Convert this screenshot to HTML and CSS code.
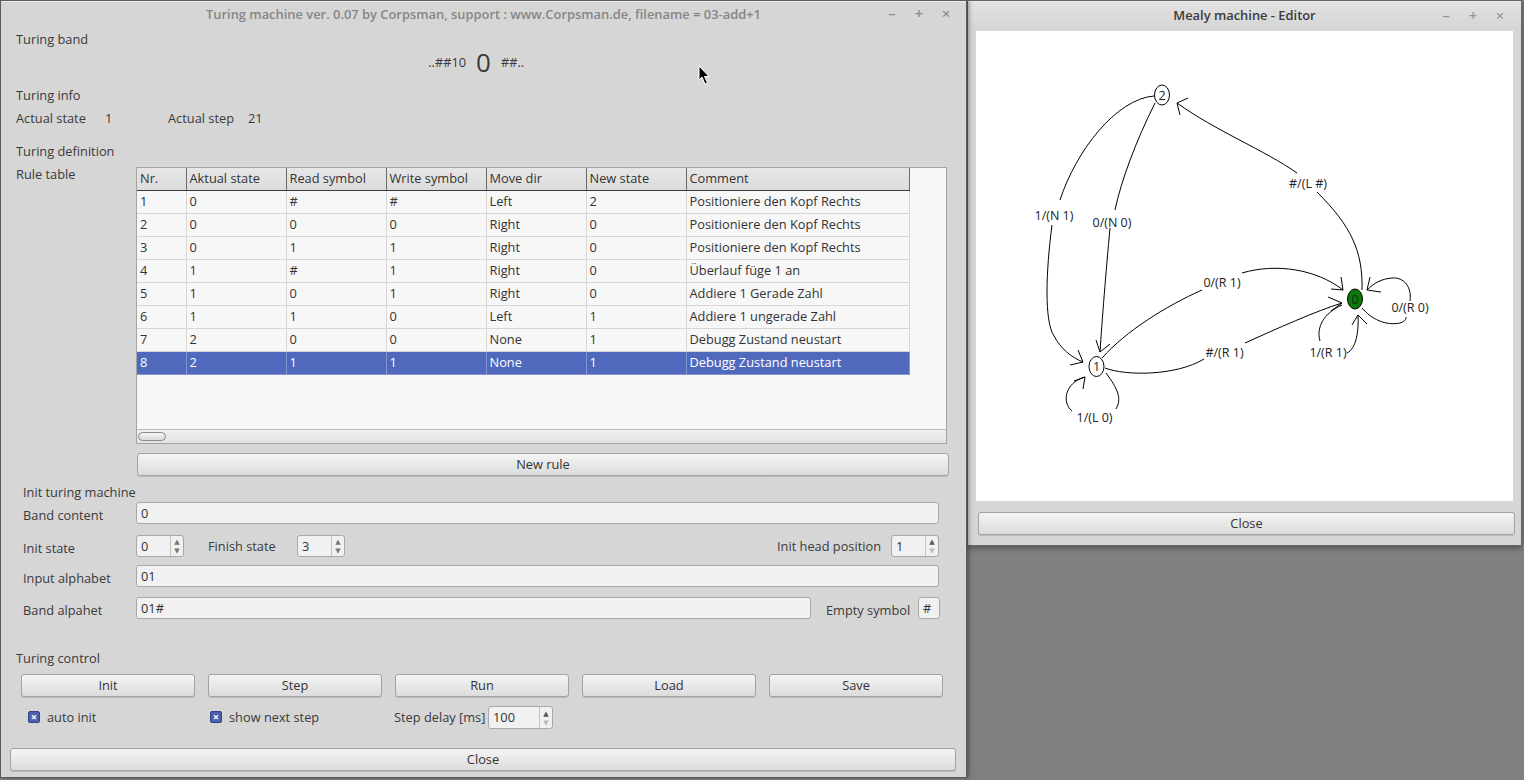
FILE: index.html
```html
<!DOCTYPE html>
<html>
<head>
<meta charset="utf-8">
<link rel="stylesheet" href="styles.css">
</head>
<body>
<div class="desktop">
  <div class="win main">
    <div class="titlebar">
      <span class="title inactive">Turing machine ver. 0.07 by Corpsman, support : www.Corpsman.de, filename = 03-add+1</span>
      <div class="wctl"><span>&#8211;</span><span>+</span><span>&#215;</span></div>
    </div>
    <div class="body">
      <div class="sec">Turing band</div>
      <div class="band"><span class="bl">..##10</span><span class="head">0</span><span class="br">##..</span></div>
      <div class="sec mt10">Turing info</div>
      <div class="info"><span class="w89">Actual state</span><span class="w63">1</span><span class="w80">Actual step</span><span>21</span></div>
      <div class="sec mt11">Turing definition</div>
      <div class="rules">
        <div class="rules-label">Rule table</div>
        <div class="tframe">
          <div class="tview">
            <table class="grid">
              <colgroup><col class="c50"><col class="c100"><col class="c100"><col class="c100"><col class="c100"><col class="c100"><col class="c223"></colgroup>
              <thead><tr><th>Nr.</th><th>Aktual state</th><th>Read symbol</th><th>Write symbol</th><th>Move dir</th><th>New state</th><th>Comment</th></tr></thead>
              <tbody>
                <tr><td>1</td><td>0</td><td>#</td><td>#</td><td>Left</td><td>2</td><td>Positioniere den Kopf Rechts</td></tr>
                <tr><td>2</td><td>0</td><td>0</td><td>0</td><td>Right</td><td>0</td><td>Positioniere den Kopf Rechts</td></tr>
                <tr><td>3</td><td>0</td><td>1</td><td>1</td><td>Right</td><td>0</td><td>Positioniere den Kopf Rechts</td></tr>
                <tr><td>4</td><td>1</td><td>#</td><td>1</td><td>Right</td><td>0</td><td>Überlauf füge 1 an</td></tr>
                <tr><td>5</td><td>1</td><td>0</td><td>1</td><td>Right</td><td>0</td><td>Addiere 1 Gerade Zahl</td></tr>
                <tr><td>6</td><td>1</td><td>1</td><td>0</td><td>Left</td><td>1</td><td>Addiere 1 ungerade Zahl</td></tr>
                <tr><td>7</td><td>2</td><td>0</td><td>0</td><td>None</td><td>1</td><td>Debugg Zustand neustart</td></tr>
                <tr class="sel"><td>8</td><td>2</td><td>1</td><td>1</td><td>None</td><td>1</td><td>Debugg Zustand neustart</td></tr>
              </tbody>
            </table>
          </div>
          <div class="hscroll"><div class="handle"></div></div>
        </div>
      </div>
      <div class="newrule-row"><button class="btn newrule">New rule</button></div>

      <div class="init">
        <div class="sub">Init turing machine</div>
        <div class="frow r1"><span class="lab">Band content</span><div class="field grow">0</div></div>
        <div class="frow r2">
          <span class="lab">Init state</span>
          <div class="spin"><span class="val">0</span><span class="arr"><i class="up">&#9650;</i><i class="dn">&#9660;</i></span></div>
          <span class="lab2">Finish state</span>
          <div class="spin"><span class="val">3</span><span class="arr"><i class="up">&#9650;</i><i class="dn">&#9660;</i></span></div>
          <span class="spacer"></span>
          <span class="lab3">Init head position</span>
          <div class="spin"><span class="val">1</span><span class="arr"><i class="up dark">&#9650;</i><i class="dn light">&#9660;</i></span></div>
        </div>
        <div class="frow r3"><span class="lab">Input alphabet</span><div class="field grow">01</div></div>
        <div class="frow r4"><span class="lab">Band alpahet</span><div class="field grow">01#</div><span class="lab4">Empty symbol</span><div class="field small">#</div></div>
      </div>

      <div class="sec ctl">Turing control</div>
      <div class="btnrow">
        <button class="btn">Init</button><button class="btn">Step</button><button class="btn">Run</button><button class="btn">Load</button><button class="btn">Save</button>
      </div>
      <div class="checkrow">
        <span class="chk"><i class="box">&#215;</i>auto init</span>
        <span class="chk c2"><i class="box">&#215;</i>show next step</span>
        <span class="lab5">Step delay [ms]</span>
        <div class="spin wide"><span class="val">100</span><span class="arr"><i class="up dark">&#9650;</i><i class="dn light">&#9660;</i></span></div>
      </div>
      <div class="closerow"><button class="btn full">Close</button></div>
    </div>
  </div>

  <div class="side">
    <div class="win editor">
      <div class="titlebar">
        <span class="title active">Mealy machine - Editor</span>
        <div class="wctl"><span>&#8211;</span><span>+</span><span>&#215;</span></div>
      </div>
      <div class="canvas">
        <svg width="537" height="470" viewBox="0 0 537 470" class="graph">
          <g fill="none" stroke="#000" stroke-width="1">
            <path d="M178,65 C140,68 100,120 84,169"/>
            <path d="M76,194 C70,240 68,290 78,305 C85,318 95,326 107,331"/>
            <path d="M94,334 L107,331 L102,319"/>
            <path d="M179,72 C160,110 145,150 139,179"/>
            <path d="M134,197 C130,240 126,290 124,321"/>
            <path d="M120,309 L124,321 L134,313"/>
            <path d="M386,259 C387,220 375,195 341,161"/>
            <path d="M321,142 C290,120 240,100 201,72"/>
            <path d="M212,67 L201,72 L204,84"/>
            <path d="M126,327 C150,300 190,275 226,259"/>
            <path d="M266,242 C300,232 340,238 367,259"/>
            <path d="M365,246 L367,259 L355,258"/>
            <path d="M129,337 C150,345 200,345 228,328"/>
            <path d="M269,312 C300,298 340,280 366,272"/>
            <path d="M352,266 L366,272 L355,280"/>
            <path d="M130,342 C142,358 146,368 140,378"/>
            <path d="M96,380 C86,372 88,352 109,346"/>
            <path d="M98,350 L109,346 L107,358"/>
            <path d="M371,322 C380,318 383,300 382,284"/>
            <path d="M376,294 L382,284 L391,293"/>
            <path d="M344,310 C340,296 348,282 366,274"/>
            <path d="M386,277 C395,288 410,295 424,292 C430,290 430,288 430,286"/>
            <path d="M434,270 C436,256 428,246 416,247 C405,248 398,252 391,259"/>
            <path d="M394,246 L391,259 L405,261"/>
          </g>
          <ellipse cx="186" cy="64" rx="7.5" ry="10" fill="#fff" stroke="#000"/>
          <ellipse cx="120.5" cy="335.5" rx="7.5" ry="10" fill="#fff" stroke="#000"/>
          <ellipse cx="379" cy="268" rx="7.5" ry="10" fill="#0a7a0a" stroke="#000"/>
          <g class="glab">
            <text x="186" y="68.5">2</text>
            <text x="120.5" y="340">1</text>
            <text x="379" y="272.5" fill="#cfe8cf">0</text>
            <text x="78" y="188.5">1/(N 1)</text>
            <text x="136" y="195.5">0/(N 0)</text>
            <text x="332" y="156.5">#/(L #)</text>
            <text x="246" y="255.5">0/(R 1)</text>
            <text x="248.5" y="325.5">#/(R 1)</text>
            <text x="352" y="325.5">1/(R 1)</text>
            <text x="434" y="280.5">0/(R 0)</text>
            <text x="118.5" y="390.5">1/(L 0)</text>
          </g>
        </svg>
      </div>
      <div class="ed-close"><button class="btn full">Close</button></div>
    </div>
  </div>

  <svg class="cursor" width="14" height="22" viewBox="0 0 14 22">
    <path d="M1,1 L1,15 L4,12 L7,19 L9.5,18 L6.5,11.5 L11,11.5 Z" fill="#000" stroke="#fff" stroke-width="1"/>
  </svg>
</div>
</body>
</html>
```

FILE: styles.css
```css
* { box-sizing: border-box; }
html, body { margin: 0; padding: 0; }
body {
  width: 1524px; height: 780px; overflow: hidden;
  font-family: "Open Sans", "DejaVu Sans", sans-serif;
  font-size: 12.8px;
  color: #3a3a3a;
  background: #808080;
}
.desktop {
  position: relative;
  display: flex;
  align-items: flex-start;
  width: 1524px; height: 780px;
  background: #808080;
}
.win {
  background: #d6d6d6;
  border: 1px solid #5a5a5a;
}
.main {
  width: 967px; height: 778px;
  box-shadow: 2px 0 4px rgba(0,0,0,0.35);
  position: relative; z-index: 1;
}
.side { flex: 1; display: flex; flex-direction: column; }
.editor {
  width: 555px; height: 546px;
  border-color: #666;
  box-shadow: 0 2px 6px rgba(0,0,0,0.4);
}

.titlebar {
  height: 27px;
  display: flex; align-items: center; justify-content: center;
  position: relative;
  border-top: 1px solid #ececec;
}
.main .titlebar .title { margin-top: -2px; }
.title { font-weight: 600; font-size: 12.9px; }
.title.inactive { color: #868686; }
.title.active { color: #3a3a3a; }
.editor .titlebar { height: 30px; background: linear-gradient(#e2e2e2, #d4d4d4); }
.editor .titlebar .title { margin-top: -3px; }
.wctl {
  position: absolute; right: 14px; top: 0; height: 100%;
  display: flex; align-items: center; gap: 15px;
  color: #8c8c8c; font-size: 15px; font-weight: 600;
  margin-top: -2px;
}
.wctl span { width: 12px; text-align: center; }
.editor .wctl { color: #999; right: 15px; }

.body { padding-left: 15px; }
.sec { height: 22px; line-height: 22px; }
.mt10 { margin-top: 10px; }
.mt11 { margin-top: 11px; }
.band {
  height: 24px;
  display: grid; grid-template-columns: 1fr auto 1fr;
  align-items: center; column-gap: 10px;
  margin-left: -15px;
}
.bl { text-align: right; }
.br { text-align: left; }
.head { font-size: 26px; line-height: 24px; }
.info { height: 22px; line-height: 22px; margin-top: 1px; display: flex; }
.w89 { width: 89px; }
.w63 { width: 63px; }
.w80 { width: 80px; }

.rules { display: flex; margin-top: 5px; }
.rules-label { width: 120px; line-height: 15px; }
.tframe {
  width: 811px; height: 277px;
  border: 1px solid #a4a4a4;
  background: #f7f7f7;
  display: flex; flex-direction: column;
}
.tview { flex: 1; overflow: hidden; }
.grid { border-collapse: collapse; table-layout: fixed; width: 772px; }
.c50 { width: 49px; }
.c100 { width: 100px; }
.c223 { width: 223px; }
.grid th {
  height: 22px; padding: 0 3px 1px; text-align: left; font-weight: normal;
  background: linear-gradient(#e6e6e6, #dcdcdc);
  border-right: 1px solid #6a6a6a;
  border-bottom: 1px solid #3c3c3c;
  color: #333;
  white-space: nowrap;
}
.grid td {
  height: 23px; padding: 0 3px 2px; white-space: nowrap;
  border-right: 1px solid #d6d6d6;
  border-bottom: 1px solid #d6d6d6;
  color: #333;
}
.grid tr.sel td { background: #5069bd; color: #fff; border-right-color: #8595cf; border-bottom-color: #8595cf; }
.hscroll {
  height: 14px; border-top: 1px solid #b8b8b8;
  background: linear-gradient(#f0f0f0, #e2e2e2);
  padding: 2px 0 0 1px;
}
.handle {
  width: 28px; height: 9px; border: 1px solid #8a8a8a; border-radius: 5px;
  background: linear-gradient(#f4f4f4, #dadada);
}

.btn {
  font-family: inherit; font-size: 12.8px; color: #333;
  height: 23px; padding: 0 0 2px;
  border: 1px solid #a2a2a2; border-radius: 3px;
  background: linear-gradient(#f4f4f4, #e8e8e8 50%, #dcdcdc);
  box-shadow: 0 1px 0 rgba(0,0,0,0.12);
}
.newrule-row { margin-top: 9px; padding-left: 121px; }
.newrule { width: 812px; display: block; }

.init { padding-left: 7px; margin-top: 6px; }
.sub { height: 20px; line-height: 20px; }
.frow { display: flex; align-items: center; height: 22px; }
.frow .lab { width: 113px; padding-top: 3px; }
.r2 { margin-top: 11px; }
.r3 { margin-top: 8px; }
.r4 { margin-top: 10px; }
.field {
  height: 22px; line-height: 20px; padding: 0 4px;
  border: 1px solid #a8a8a8; border-radius: 3px;
  background: #f1f1f1; color: #333;
}
.grow { width: 803px; }
.r4 .grow { width: 675px; }
.lab4 { margin-left: 15px; width: 92px; white-space: nowrap; padding-top: 3px; }
.field.small { width: 22px; padding: 0 4px; }
.spin {
  width: 48px; height: 22px; display: flex;
  border: 1px solid #a8a8a8; border-radius: 3px; background: #f1f1f1;
}
.spin .val { flex: 1; line-height: 20px; padding-left: 4px; color: #333; }
.spin .arr {
  width: 13px; border-left: 1px solid #c4c4c4;
  display: flex; flex-direction: column; align-items: center; justify-content: center;
}
.spin .arr i { font-style: normal; font-size: 7px; line-height: 9px; color: #777; }
.spin .arr i.dark { color: #555; }
.spin .arr i.light { color: #bbb; }
.lab2 { margin-left: 24px; width: 89px; }
.spacer { flex: 1; }
.lab3 { width: 114px; white-space: nowrap; }
.r2 { width: 916px; }

.ctl { margin-top: 29px; height: 20px; line-height: 20px; }
.btnrow { display: flex; gap: 13px; margin-top: 6px; padding-left: 5px; }
.btnrow .btn { width: 174px; }
.checkrow { display: flex; align-items: center; height: 23px; margin-top: 9px; padding-left: 12px; }
.chk { display: flex; align-items: center; width: 182px; padding-bottom: 1px; }
.chk.c2 { width: 184px; }
.box {
  width: 12px; height: 12px; margin-right: 7px;
  background: #4c5fa9; border: 1px solid #34428a; border-radius: 2px;
  color: #fff; font-style: normal; font-size: 11px; line-height: 9px; text-align: center; font-weight: bold;
}
.lab5 { width: 94px; white-space: nowrap; padding-bottom: 1px; }
.spin.wide { width: 65px; height: 23px; }
.closerow { margin-top: 19px; margin-left: -6px; }
.btn.full { width: 946px; display: block; }

.canvas { margin: 0 8px 0 8px; width: 537px; height: 470px; background: #fff; }
.graph { display: block; }
.glab text { font-family: "Open Sans", "DejaVu Sans", sans-serif; font-size: 12.5px; text-anchor: middle; fill: #222; }
.ed-close { padding: 11px 6px 0 10px; }
.ed-close .btn.full { width: 537px; }

.cursor { position: absolute; left: 698px; top: 65px; z-index: 5; }
```
